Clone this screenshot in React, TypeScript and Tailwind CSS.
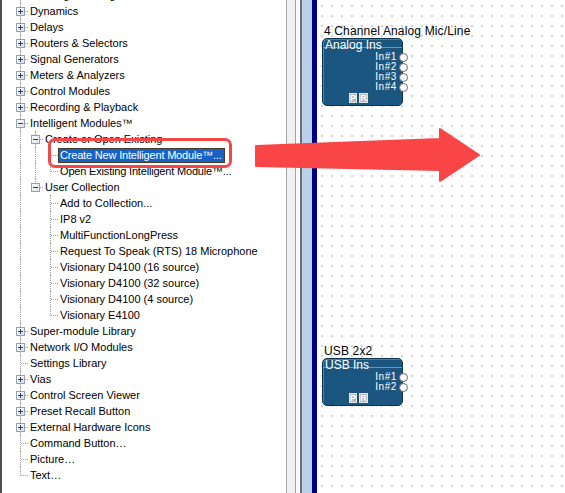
import React from "react";

type TreeNode = {
  label: string;
  level: number;
  guides: boolean[];
  last?: boolean;
  toggle?: "+" | "-";
  selected?: boolean;
  tight?: boolean;
};

const TREE: TreeNode[] = [
  { label: "Ducking & Gating", level: 0, guides: [], toggle: "+" },
  { label: "Dynamics", level: 0, guides: [], toggle: "+" },
  { label: "Delays", level: 0, guides: [], toggle: "+" },
  { label: "Routers & Selectors", level: 0, guides: [], toggle: "+" },
  { label: "Signal Generators", level: 0, guides: [], toggle: "+" },
  { label: "Meters & Analyzers", level: 0, guides: [], toggle: "+" },
  { label: "Control Modules", level: 0, guides: [], toggle: "+" },
  { label: "Recording & Playback", level: 0, guides: [], toggle: "+" },
  { label: "Intelligent Modules™", level: 0, guides: [], toggle: "-" },
  { label: "Create or Open Existing", level: 1, guides: [true], toggle: "-" },
  { label: "Create New Intelligent Module™...", level: 2, guides: [true, true], selected: true, tight: true },
  { label: "Open Existing Intelligent Module™...", level: 2, guides: [true, true], last: true, tight: true },
  { label: "User Collection", level: 1, guides: [true], toggle: "-", last: true },
  { label: "Add to Collection...", level: 2, guides: [true, false] },
  { label: "IP8 v2", level: 2, guides: [true, false] },
  { label: "MultiFunctionLongPress", level: 2, guides: [true, false] },
  { label: "Request To Speak (RTS) 18 Microphone", level: 2, guides: [true, false] },
  { label: "Visionary D4100 (16 source)", level: 2, guides: [true, false] },
  { label: "Visionary D4100 (32 source)", level: 2, guides: [true, false] },
  { label: "Visionary D4100 (4 source)", level: 2, guides: [true, false] },
  { label: "Visionary E4100", level: 2, guides: [true, false], last: true },
  { label: "Super-module Library", level: 0, guides: [], toggle: "+" },
  { label: "Network I/O Modules", level: 0, guides: [], toggle: "+" },
  { label: "Settings Library", level: 0, guides: [] },
  { label: "Vias", level: 0, guides: [], toggle: "+" },
  { label: "Control Screen Viewer", level: 0, guides: [], toggle: "+" },
  { label: "Preset Recall Button", level: 0, guides: [], toggle: "+" },
  { label: "External Hardware Icons", level: 0, guides: [], toggle: "+" },
  { label: "Command Button…", level: 0, guides: [] },
  { label: "Picture…", level: 0, guides: [] },
  { label: "Text…", level: 0, guides: [], last: true },
];

function ToggleBox({ sign }: { sign: "+" | "-" }) {
  return (
    <div className="absolute left-[3px] top-[4px] h-[9px] w-[9px] border border-[#8ea4bd] bg-gradient-to-br from-white to-[#dcdfe4]">
      <div className="absolute left-[1px] top-[3px] h-px w-[5px] bg-[#2b3f63]" />
      {sign === "+" && <div className="absolute left-[3px] top-[1px] h-[5px] w-px bg-[#2b3f63]" />}
    </div>
  );
}

function TreeRow({ node }: { node: TreeNode }) {
  const tracking = node.tight ? "tracking-[-0.18px]" : "";
  return (
    <div className="flex h-4 items-stretch">
      {node.guides.map((g, i) => (
        <div key={i} className="relative w-[15px] shrink-0">
          {g && <div className="absolute bottom-0 left-[7px] top-0 border-l border-dotted border-[#9d9d9d]" />}
        </div>
      ))}
      <div className="relative w-[15px] shrink-0">
        <div
          className={
            node.last
              ? "absolute left-[7px] top-0 h-[9px] border-l border-dotted border-[#9d9d9d]"
              : "absolute bottom-0 left-[7px] top-0 border-l border-dotted border-[#9d9d9d]"
          }
        />
        <div className="absolute left-[8px] right-0 top-[8px] border-t border-dotted border-[#9d9d9d]" />
        {node.toggle && <ToggleBox sign={node.toggle} />}
      </div>
      {node.selected ? (
        <div className="flex items-center">
          <span
            className={`h-[15px] whitespace-nowrap border border-[#4a3a28] bg-[#1762c6] pl-[1px] pr-[2px] text-[11px] leading-[13px] text-white ${tracking}`}
          >
            {node.label}
          </span>
        </div>
      ) : (
        <span className={`whitespace-nowrap pl-[2px] pr-[2px] text-[11px] leading-[16px] text-black ${tracking}`}>
          {node.label}
        </span>
      )}
    </div>
  );
}

type ModuleProps = {
  title: string;
  name: string;
  ports: string[];
  left: string;
  top: string;
};

function Module({ title, name, ports, left, top }: ModuleProps) {
  return (
    <div className={`absolute flex flex-col ${left} ${top}`}>
      <div className="h-[14px] whitespace-nowrap pl-[2px] text-[12px] leading-[14px] tracking-[0.15px] text-black">
        {title}
      </div>
      <div className="relative flex w-[81px] flex-col rounded-[5px] border border-[#0c344f] bg-[#1a5680] pb-[2px] shadow-[inset_1px_1px_0_rgba(255,255,255,0.25)]">
        <div className="absolute left-0 right-0 top-[8px] h-px bg-[#6f95b3]" />
        <div className="relative h-[13px] pl-[2px] text-[12px] leading-[13px] text-white">{name}</div>
        {ports.map((p) => (
          <div key={p} className="relative flex h-[10px] items-center justify-end pr-[5px]">
            <span className="text-[10px] leading-[10px] tracking-[0.6px] text-white">{p}</span>
            <div className="absolute -right-[5.5px] top-[0.5px] h-[9px] w-[9px] rounded-full border-[1.5px] border-[#6a6a6a] bg-white" />
          </div>
        ))}
        <div className="mt-[1px] flex h-[10px] gap-[2px] pl-[26px]">
          <div className="flex h-[10px] w-[8px] items-center justify-center border border-[#e6e6e6] bg-[#b9b9b9] text-[9px] font-bold leading-none text-white">
            P
          </div>
          <div className="flex h-[10px] w-[9px] items-center justify-center border border-[#e6e6e6] bg-[#b9b9b9] text-[9px] font-bold leading-none text-white">
            R
          </div>
        </div>
      </div>
    </div>
  );
}

export default function App() {
  return (
    <div className="relative flex h-[493px] w-[565px] overflow-hidden bg-white font-['Liberation_Sans',Arial,sans-serif]">
      {/* module tree */}
      <div className="h-full w-[286px] shrink-0 overflow-hidden border-l-2 border-[#4f4f4f] bg-white">
        <div className="-mt-[13px] pl-[11px]">
          {TREE.map((n, i) => (
            <TreeRow key={i} node={n} />
          ))}
        </div>
      </div>

      {/* splitter and window frame */}
      <div className="h-full w-px shrink-0 bg-[#a3a3a3]" />
      <div className="h-full w-[8px] shrink-0 bg-[#f0f0f0]" />
      <div className="h-full w-px shrink-0 bg-[#a3a3a3]" />
      <div className="h-full w-[4px] shrink-0 bg-[#fafafa]" />
      <div className="h-full w-[2px] shrink-0 bg-[#6e6e6e]" />
      <div className="h-full w-[10px] shrink-0 bg-[#b9d1ea]" />
      <div className="h-full w-[5px] shrink-0 bg-[#000080]" />

      {/* design canvas */}
      <div className="relative h-full flex-1 bg-white bg-[radial-gradient(circle,#c2c2c2_0.6px,transparent_1px)] bg-size-[10px_10px] bg-position-[0_1px]">
        <Module
          title="4 Channel Analog Mic/Line"
          name="Analog Ins"
          ports={["In#1", "In#2", "In#3", "In#4"]}
          left="left-[5px]"
          top="top-[24px]"
        />
        <Module title="USB 2x2" name="USB Ins" ports={["In#1", "In#2"]} left="left-[5px]" top="top-[344px]" />
      </div>

      {/* callout highlight */}
      <div className="pointer-events-none absolute left-[48px] top-[138px] h-[30px] w-[184px] rounded-[7px] border-[3px] border-[#f24848]" />
      <svg className="pointer-events-none absolute left-0 top-0" width="565" height="493" viewBox="0 0 565 493">
        <polygon
          points="256,146 440,139 440,129 479,155 440,181 440,170 256,166"
          fill="#f94545"
          stroke="#f94545"
          strokeWidth="2"
          strokeLinejoin="round"
        />
      </svg>
    </div>
  );
}
